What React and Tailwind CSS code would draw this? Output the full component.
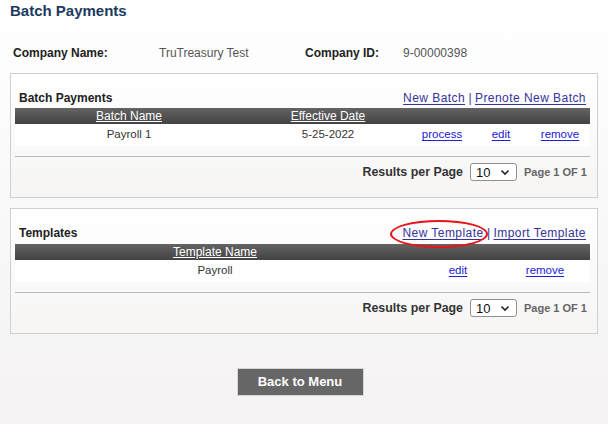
import React from "react";

function Select() {
  return (
    <div className="flex h-[18px] w-[47px] items-center justify-between rounded-[3px] border border-[#8f8f8f] bg-white pl-[5px] pr-[5px] text-[13px] leading-none text-[#111]">
      <span>10</span>
      <svg width="10" height="7" viewBox="0 0 10 7" className="mr-[1px]">
        <path d="M1.5 1.5 L5 5 L8.5 1.5" fill="none" stroke="#222" strokeWidth="1.6" />
      </svg>
    </div>
  );
}

function Results() {
  return (
    <div className="flex h-[18px] items-center justify-end gap-[7px] pr-[3px] mt-[6px]">
      <span className="text-[12.4px] font-bold text-[#333]">Results per Page</span>
      <Select />
      <span className="text-[11px] font-bold text-[#666]">Page 1 OF 1</span>
    </div>
  );
}

const topLink = "text-[#34349a] underline underline-offset-[2px] tracking-[0.45px]";
const rowLink = "text-[#2020d8] underline underline-offset-[2px]";

export default function App() {
  return (
    <div
      className="h-[424px] w-[608px] overflow-hidden bg-gradient-to-b from-white to-[#f4f2f2] text-[#222]"
      style={{ fontFamily: '"Liberation Sans", Arial, sans-serif' }}
    >
      <div className="h-[22px] pl-[10px] text-[15px] font-bold leading-[22px] text-[#1b3a5e]">
        Batch Payments
      </div>

      <div className="mt-[23px] flex h-[16px] items-center text-[12px] leading-[16px]">
        <span className="ml-[13px] w-[146px] font-bold text-[#222]">Company Name:</span>
        <span className="w-[146px] text-[#555]">TruTreasury Test</span>
        <span className="w-[98px] font-bold text-[#222]">Company ID:</span>
        <span className="text-[#555]">9-00000398</span>
      </div>

      {/* Batch panel */}
      <div className="mx-[10px] mt-[12px] h-[125px] w-[588px] border border-[#cfcfcf] bg-gradient-to-b from-white to-[#f6f5f4] pl-[4px] pr-[7px] pt-[16px]">
        <div className="flex h-[18px] items-start justify-between pb-[2px] text-[12px] leading-[16px]">
          <span className="ml-[4px] font-bold text-[#222]">Batch Payments</span>
          <span className="mr-[4px]">
            <a className={topLink}>New Batch</a>
            <span className="text-[#34349a]"> | </span>
            <a className={topLink}>Prenote New Batch</a>
          </span>
        </div>
        <div className="grid h-[16px] grid-cols-[228px_170px_58px_60px_58px] bg-gradient-to-b from-[#646464] to-[#434343] text-[12px] leading-[16px] text-white">
          <span className="text-center underline">Batch Name</span>
          <span className="text-center underline">Effective Date</span>
          <span></span>
          <span></span>
          <span></span>
        </div>
        <div className="grid h-[22px] grid-cols-[228px_170px_58px_60px_58px] items-center bg-white text-[11.5px] text-[#333]">
          <span className="text-center">Payroll 1</span>
          <span className="text-center">5-25-2022</span>
          <span className="text-center"><a className={rowLink}>process</a></span>
          <span className="text-center"><a className={rowLink}>edit</a></span>
          <span className="text-center"><a className={rowLink}>remove</a></span>
        </div>
        <div className="mt-[10px] h-px bg-[#b8b8b8]" />
        <Results />
      </div>

      {/* Templates panel */}
      <div className="mx-[10px] mt-[10px] h-[126px] w-[588px] border border-[#cfcfcf] bg-gradient-to-b from-white to-[#f6f5f4] pl-[4px] pr-[7px] pt-[16px]">
        <div className="flex h-[19px] items-start justify-between pb-[3px] text-[12px] leading-[16px]">
          <span className="ml-[4px] font-bold text-[#222]">Templates</span>
          <span className="mr-[4px]">
            <a className={`relative ${topLink}`}>
              New Template
              <span className="pointer-events-none absolute left-[-12px] top-[-6px] h-[28px] w-[98px] rounded-[50%] border-2 border-[#e8141a]" />
            </a>
            <span className="text-[#34349a]"> | </span>
            <a className={topLink}>Import Template</a>
          </span>
        </div>
        <div className="grid h-[16px] grid-cols-[400px_86px_88px] bg-gradient-to-b from-[#646464] to-[#434343] text-[12px] leading-[16px] text-white">
          <span className="text-center underline">Template Name</span>
          <span></span>
          <span></span>
        </div>
        <div className="grid h-[22px] grid-cols-[400px_86px_88px] items-center bg-white text-[11.5px] text-[#333]">
          <span className="text-center">Payroll</span>
          <span className="text-center"><a className={rowLink}>edit</a></span>
          <span className="text-center"><a className={rowLink}>remove</a></span>
        </div>
        <div className="mt-[10px] h-px bg-[#b8b8b8]" />
        <Results />
      </div>

      <div className="mt-[34px] flex justify-center pr-[8px]">
        <button className="h-[28px] w-[127px] border border-[#d6d6d6] bg-[#666] text-[13px] font-bold text-white">
          Back to Menu
        </button>
      </div>
    </div>
  );
}
